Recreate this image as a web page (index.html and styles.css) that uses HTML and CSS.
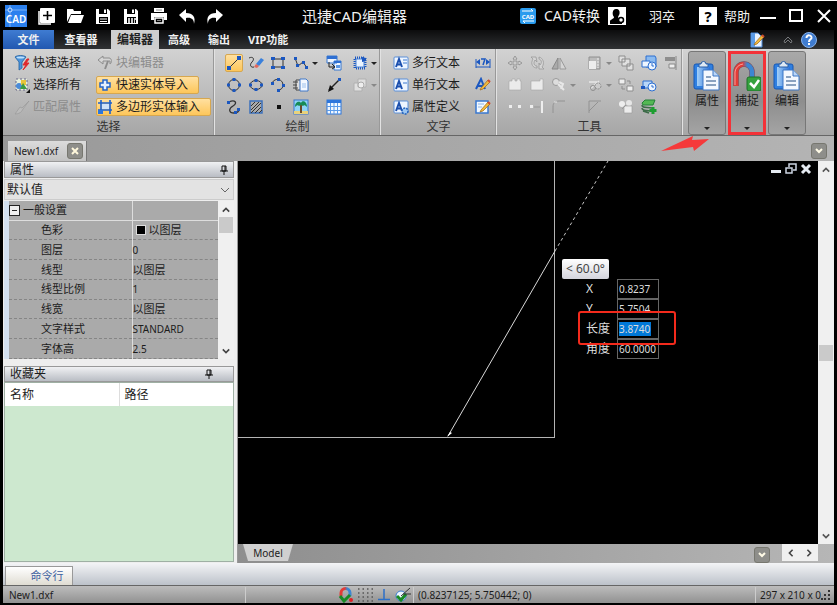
FILE: index.html
```html
<!DOCTYPE html>
<html lang="zh-CN">
<head>
  <meta charset="UTF-8">
  <meta name="viewport" content="width=device-width, initial-scale=1.0">
  <title>迅捷CAD编辑器</title>
  <link rel="stylesheet" href="styles.css">
</head>
<body>
  <svg class="defs" width="0" height="0" aria-hidden="true">
    <defs>
      <linearGradient id="blue" x1="0" y1="0" x2="1" y2="0"><stop offset="0" stop-color="#a4d0f8"/><stop offset="1" stop-color="#2a70d8"/></linearGradient>
      <linearGradient id="magnet" x1="0" y1="0" x2="1" y2="0"><stop offset="0.4" stop-color="#e23b36"/><stop offset="0.7" stop-color="#3d86d2"/></linearGradient>
      <symbol id="clip" viewBox="0 0 28 30">
        <rect x="1" y="3" width="19" height="25" rx="2" fill="#2f7fe0" stroke="#1758b4"/>
        <rect x="4" y="6" width="13" height="19" fill="url(#blue)"/>
        <path d="M6 6V3h2a2.500 2.500 0 0 1 5 0h2v3z" fill="#dfe9f4" stroke="#2b5fa6"/>
        <path d="M10 9h10l6 6v14H10z" fill="#f4f8fe" stroke="#3c76c4"/>
        <path d="M20 9v6h6" fill="#bcd6f6" stroke="#3c76c4"/>
        <path d="M13 16h5M13 20h10M13 24h10" stroke="#8aa2c0" stroke-width="2"/>
      </symbol>
      <symbol id="boxA" viewBox="0 0 16 16">
        <rect x="1" y="2" width="14" height="12" rx="1" fill="#eef5ff" stroke="#5b8fd8"/>
        <path d="M3 12L6 4l3 8M4 9.500h4" fill="none" stroke="#1b4fae" stroke-width="2"/>
      </symbol>
      <symbol id="pencil" viewBox="0 0 16 16">
        <path d="M6 11L13 3l2 2-7 7-3 1z" fill="#f2b93b" stroke="#99651a" stroke-width=".7"/>
        <path d="M13 3l2 2" stroke="#d04b2e" stroke-width="2"/>
      </symbol>
    </defs>
  </svg>

  <!-- title bar -->
  <header class="titlebar">
    <svg class="logo" viewBox="0 0 22 22"><rect width="22" height="22" fill="#2b80ee"/><path d="M5 0v22M0 5h22" stroke="#8dbdf8" stroke-width=".8"/><circle cx="5" cy="5" r="2" fill="#2b80ee" stroke="#cfe3fd"/><text x="11" y="18" class="logo-text">CAD</text></svg>
    <div class="quick">
      <button aria-label="新建"><svg viewBox="0 0 18 18"><path d="M1 4v13h12" fill="none" stroke="#fff" stroke-width="1.500"/><rect x="2" y="1" width="15" height="15" rx="1" fill="#fff"/><path d="M9.500 4v9M5 8.500h9" stroke="#000" stroke-width="1.600"/></svg></button>
      <button aria-label="打开"><svg viewBox="0 0 18 18"><path d="M1 15V2h6l1 2h7v3H5z" fill="#fff"/><path d="M5 8h13l-3 8H2z" fill="#fff"/></svg></button>
      <button aria-label="保存"><svg viewBox="0 0 18 18"><path d="M2 2h12l2 2v13H2z" fill="#fff"/><path d="M5 2h8v5H5zM5 10h9v6H5z" fill="#000"/><path d="M10 2.500h2v3.500h-2zM6 11.500h7v1H6zM6 14h7v1H6z" fill="#fff"/></svg></button>
      <button aria-label="保存为PDF"><svg viewBox="0 0 18 18"><path d="M2 2h12l2 2v13H2z" fill="#fff"/><path d="M5 2h8v5H5zM5 10h9v6H5z" fill="#000"/><path d="M10 2.500h2v3.500h-2z" fill="#fff"/><path d="M6 11h2v5H6zM9 11h2v5H9zM12 11h2v2h-1v3h-1z" fill="#ccc"/></svg></button>
      <button aria-label="打印"><svg viewBox="0 0 18 18"><path d="M4 1h10v4H4zM1 6h16v7h-3v-3H4v3H1z" fill="#fff"/><path d="M5 11h8v5H5z" fill="#000" stroke="#fff" stroke-width="1.500"/><path d="M6 3h6M7 13.500h4" stroke="#888"/></svg></button>
      <button aria-label="撤销"><svg viewBox="0 0 18 18"><path d="M1 8l7-6v4c7 0 10 4 8 11 0-5-3-7-8-6v4z" fill="#fff"/></svg></button>
      <button aria-label="重做"><svg viewBox="0 0 18 18"><path d="M17 8l-7-6v4C3 6 0 10 2 17c0-5 3-7 8-6v4z" fill="#fff"/></svg></button>
    </div>
    <h1>迅捷CAD编辑器</h1>
    <div class="account">
      <button class="convert"><svg viewBox="0 0 18 18"><rect x="1" y="1" width="16" height="16" rx="2" fill="#2a9bee"/><path d="M3 4h11l-2-2M15 14H4l2 2" fill="none" stroke="#fff"/><text x="9" y="12" class="tiny-text">CAD</text></svg>CAD转换</button>
      <button class="user"><svg viewBox="0 0 18 18"><rect width="18" height="18" fill="#fff"/><path d="M8 2c3 0 4 2 3.500 5L10 10c0 2 2 2 4 3v4H2v-3c1-2 4-2 4-4C4 8 4 2 8 2z" fill="#000"/><circle cx="13" cy="13" r="2.500" fill="#fff" stroke="#000" stroke-width="1.500"/></svg>羽卒</button>
      <button class="help"><span class="mark">?</span>帮助</button>
    </div>
    <div class="window-buttons">
      <button aria-label="最小化"><svg viewBox="0 0 16 16"><path d="M0 9h16v2H0z" fill="#fff"/></svg></button>
      <button aria-label="最大化"><svg viewBox="0 0 16 16"><rect x="2" y="2" width="12" height="11" fill="none" stroke="#fff" stroke-width="2"/></svg></button>
      <button aria-label="关闭"><svg viewBox="0 0 16 16"><path d="M2 2l12 12M14 2L2 14" stroke="#fff" stroke-width="2"/></svg></button>
    </div>
  </header>

  <!-- ribbon tabs -->
  <nav class="tabs">
    <button class="file">文件</button>
    <button class="viewer">查看器</button>
    <button class="active">编辑器</button>
    <button>高级</button>
    <button>输出</button>
    <button>VIP功能</button>
    <div class="tab-tools">
      <svg viewBox="0 0 16 16"><path d="M2 1h7l4 4v10H2z" fill="#e9f2ff" stroke="#4b88d8"/><path d="M2 1h4v14H2z" fill="#5a9be8"/><use href="#pencil"/></svg>
      <svg class="small" viewBox="0 0 10 10"><path d="M1 6l4-4 4 4-1 2-3-3-3 3z" fill="none" stroke="#77797c"/></svg>
      <svg viewBox="0 0 16 16"><circle cx="8" cy="8" r="7.500" fill="#3f7cd0" stroke="#88b2ea"/><path d="M5.500 6c0-4 5.500-3 5 0-.5 1.500-2.500 1.500-2.500 4M8 11v2" fill="none" stroke="#fff" stroke-width="2"/></svg>
    </div>
  </nav>

  <!-- ribbon -->
  <section class="ribbon">
    <div class="group select-group">
      <div class="rows">
        <button><svg viewBox="0 0 16 16"><path d="M1 2c2-2 9-2 11 0L8 7v6l-3 2V7z" fill="#4c94dc" stroke="#22609f" stroke-width=".8"/><ellipse cx="6.500" cy="2.500" rx="4" ry="1" fill="#bfe0fa"/><path d="M13 4l-4 6h3l-3 5 6-7h-3l3-4z" fill="#e0282c" stroke="#e0282c"/></svg>快速选择</button>
        <button disabled><svg viewBox="0 0 16 16"><path d="M1 5l5-4v2h6c3 0 3 5 1 6V6H6v3z" fill="#d5d5d5" stroke="#8d8d8d"/><path d="M11 6L8 14" stroke="#8d8d8d" stroke-width="2"/></svg>块编辑器</button>
        <button><svg viewBox="0 0 16 16"><rect x="2" y="2" width="11" height="11" fill="#e8f0dc" stroke="#668" stroke-dasharray="2 2"/><circle cx="5" cy="9" r="3" fill="#4a8bd8"/><path d="M7 3h5v5H7z" fill="#e8c43a"/><path d="M6 12l3-6 4 6z" fill="#3d9a44"/><path d="M16 12v4h-4z" fill="#111"/></svg>选择所有</button>
        <button class="lit"><svg viewBox="0 0 16 16"><path d="M6 3h4v3h3v4h-3v3H6v-3H3V6h3z" fill="#e3effd" stroke="#2465c8" stroke-width="1.500"/></svg>快速实体导入</button>
        <button disabled><svg viewBox="0 0 16 16"><path d="M15 2L8 9l-2-1-5 7c4 0 7-2 8-5z" fill="#bbb" stroke="#999" stroke-width=".7"/></svg>匹配属性</button>
        <button class="lit"><svg viewBox="0 0 16 16"><path d="M4 1v14M13 1v14M1 4h14M1 11h14" stroke="#1c60cc" stroke-width="1.600"/><path d="M5 5h7v5H5z" fill="#cfe2f8"/><path d="M1 11h5v4H1z" fill="#2d76dc"/></svg>多边形实体输入</button>
      </div>
      <h2>选择</h2>
    </div>

    <div class="group draw-group">
      <div class="rows">
        <button class="lit" aria-label="直线"><svg viewBox="0 0 16 16"><path d="M3 13L13 3" stroke="#333"/><path d="M1 11h4v4H1zM11 1h4v4h-4z" fill="#1b57c0"/></svg></button>
        <button aria-label="草图"><svg viewBox="0 0 16 16"><path d="M1 3c4-2 6 1 3 4s-1 6 2 5" fill="none" stroke="#333"/><path d="M8 9l5-6 3 2-5 6z" fill="#3a80dc"/><path d="M6 12l2-3 3 2-2 2z" fill="#e2675c"/></svg></button>
        <button aria-label="矩形"><svg viewBox="0 0 16 16"><path d="M3 4h10v8H3z" fill="none" stroke="#333"/><path d="M1 2h4v3H1zM11 2h4v3h-4zM1 11h4v3H1zM11 11h4v3h-4z" fill="#1b57c0"/></svg></button>
        <button class="drop" aria-label="多段线"><svg viewBox="0 0 16 16"><path d="M2 3l3 8 5-4 4 6" fill="none" stroke="#333"/><path d="M1 2h3v3H1zM3 9h3v3H3zM9 6h3v3H9zM12 11h3v3h-3z" fill="#1b57c0"/></svg></button>
        <button aria-label="插入块"><svg viewBox="0 0 16 16"><path d="M1 1h10v7H1zM8 6h7v9H8z" fill="#eef5ff" stroke="#3878d0"/><path d="M1 1h10v3H1zM8 6h7v2H8z" fill="#2e6fd2"/><path d="M3 7v5h5M6 9l3 3-3 2" fill="none" stroke="#222"/><path d="M10 10h4v3h-4z" fill="#5c97e4"/></svg></button>
        <button class="drop" aria-label="面域"><svg viewBox="0 0 16 16"><path d="M3 3h10v10H3z" fill="none" stroke="#1b57c0" stroke-width="3" stroke-dasharray="1 1"/><path d="M4 4h8v8H4z" fill="#eaf3ff" stroke="#4a83d6"/><path d="M10 2l4 1v3l-4 1z" fill="#1b57c0"/></svg></button>
        <button aria-label="圆"><svg viewBox="0 0 16 16"><circle cx="8" cy="8" r="5.500" fill="none" stroke="#333"/><path d="M6.500 1h3v3h-3zM6.500 12h3v3h-3zM1 6.500h3v3H1zM12 6.500h3v3h-3z" fill="#1b57c0"/></svg></button>
        <button aria-label="椭圆"><svg viewBox="0 0 16 16"><ellipse cx="8" cy="8" rx="6" ry="4.500" fill="none" stroke="#333"/><path d="M6.500 2h3v3h-3zM6.500 11h3v3h-3zM1 6.500h3v3H1zM12 6.500h3v3h-3z" fill="#1b57c0"/></svg></button>
        <button aria-label="圆弧"><svg viewBox="0 0 16 16"><path d="M2 6c3-6 11-4 11 2 0 3-2 5-5 5" fill="none" stroke="#333"/><path d="M1 5h3v3H1zM7 1h3v3H7zM12 7h3v3h-3zM7 12h3v3H7z" fill="#1b57c0"/></svg></button>
        <button aria-label="粘贴块"><svg viewBox="0 0 16 16"><path d="M3 3h7v10H3z" fill="#ddd" stroke="#444"/><path d="M7 2h6l2 2v10H7z" fill="#f4f8ff" stroke="#4078c8"/><path d="M9 6h4v5H9z" fill="#c8dcf6"/><path d="M0 5h5M0 8h4M0 11h5" stroke="#444"/></svg></button>
        <button aria-label="射线"><svg viewBox="0 0 16 16"><path d="M3 13L13 3" stroke="#222" stroke-width="1.500"/><path d="M2 15l2-7 4 4z" fill="#111"/><path d="M12 1h3v3h-3z" fill="#1b57c0"/></svg></button>
        <button class="drop" disabled aria-label="三维"><svg viewBox="0 0 16 16"><path d="M6 2h8v8H6zM2 6h8v8H2z" fill="#e0e0e0" stroke="#b0b0b0"/><circle cx="9" cy="8" r="3" fill="#eee" stroke="#aaa"/></svg></button>
        <button aria-label="样条曲线"><svg viewBox="0 0 16 16"><path d="M3 3c6-3 9 1 4 4s-4 7 1 7c3 0 5-1 5-4" fill="none" stroke="#333" stroke-width="1.300"/><path d="M1 2h3v3H1zM11 9h3v3h-3zM8 12h3v3H8z" fill="#1b57c0"/></svg></button>
        <button aria-label="填充"><svg viewBox="0 0 16 16"><path d="M2 2h12v12H2z" fill="#aaa" stroke="#3b70bc" stroke-width="1.500"/><path d="M3 7l4-4M3 11l8-8M3 14l10-10M7 14l6-6M11 14l3-3" stroke="#333"/></svg></button>
        <button aria-label="点"><svg viewBox="0 0 16 16"><path d="M7 6h4v4H7z" fill="#111"/></svg></button>
        <button aria-label="图像"><svg viewBox="0 0 16 16"><rect x="1" y="1" width="14" height="14" fill="#8ed4f6" stroke="#3a76cc"/><path d="M1 12h14v3H1z" fill="#e8d27c"/><path d="M8 5v9" stroke="#6d4a28" stroke-width="2"/><path d="M2 8c0-6 5-6 6-4 1-3 6-2 6 4-2-2-3-2-4-1l-2-1-2 1c-1-1-2-1-4 1z" fill="#168b55"/></svg></button>
        <button aria-label="表格"><svg viewBox="0 0 16 16"><rect x="1" y="1" width="14" height="14" fill="#f2f8ff" stroke="#2d76dc"/><path d="M1 1h14v3H1z" fill="#2d76dc"/><path d="M1 7.500h14M1 11.500h14M4.500 4v11M8 4v11M11.500 4v11" stroke="#5a9bea"/></svg></button>
      </div>
      <h2>绘制</h2>
    </div>

    <div class="group text-group">
      <div class="rows">
        <button><svg viewBox="0 0 16 16"><use href="#boxA"/><path d="M10 5h4M10 8h4" stroke="#3a78d0"/></svg>多行文本</button>
        <button aria-label="标注"><svg viewBox="0 0 16 16"><path d="M1 4v9M15 4v9M1 12h14" stroke="#1b57c0"/><path d="M1 7l4-3v6zM15 7l-4-3v6z" fill="#1b57c0"/><path d="M6 4h4l-2 6" fill="none" stroke="#1b57c0" stroke-width="1.500"/></svg></button>
        <button><svg viewBox="0 0 16 16"><use href="#boxA"/><path d="M10 6h4" stroke="#3a78d0"/></svg>单行文本</button>
        <button aria-label="文字样式"><svg viewBox="0 0 16 16"><path d="M1 12L6 2l4 10M3 9h6" fill="none" stroke="#1b57c0" stroke-width="2"/><use href="#pencil"/></svg></button>
        <button><svg viewBox="0 0 16 16"><use href="#boxA"/><circle cx="12" cy="12" r="3" fill="#9cc6f2" stroke="#2362bc" stroke-width="1.500" stroke-dasharray="2 1"/></svg>属性定义</button>
        <button aria-label="编辑文字"><svg viewBox="0 0 16 16"><path d="M1 2h12v12H1z" fill="#f2f8ff" stroke="#3a78d0" stroke-width="1.500"/><path d="M3 5h6M3 8h4" stroke="#8bb4e8"/><use href="#pencil"/></svg></button>
      </div>
      <h2>文字</h2>
    </div>

    <div class="group tool-group">
      <div class="rows">
        <button disabled aria-label="移动"><svg viewBox="0 0 16 16"><path d="M8 1l2 3H9v3h3V6l3 2-3 2V9H9v3h1l-2 3-2-3h1V9H4v1L1 8l3-2v1h3V4H6z" fill="#ccc" stroke="#8d8d8d" stroke-width=".8"/></svg></button>
        <button disabled aria-label="旋转"><svg viewBox="0 0 16 16"><path d="M7 2H2l2 2c-3 5 0 9 4 9v-2c-3 0-4-3-2-6l2 2zM10 2v2c3 1 3 4 1 6l-1-2v6h5l-2-2c3-4 1-9-3-10z" fill="#d5d5d5" stroke="#999" stroke-width=".8"/></svg></button>
        <button disabled aria-label="镜像"><svg viewBox="0 0 16 16"><path d="M7 3v11H1z" fill="#aaa" stroke="#888"/><path d="M9 3v11h6z" fill="#d5d5d5" stroke="#999"/></svg></button>
        <button disabled class="drop" aria-label="缩放"><svg viewBox="0 0 16 16"><path d="M2 2h11v12H2z" fill="#bbb" stroke="#909090"/><path d="M2 6h7v8H2z" fill="#eee"/><path d="M11 3v10" stroke="#eee" stroke-dasharray="2 1"/></svg></button>
        <button disabled aria-label="组合"><svg viewBox="0 0 16 16"><path d="M1 1h6v6H1zM9 9h6v6H9zM4 4h8v7H4z" fill="#e0e0e0" stroke="#8d8d8d"/></svg></button>
        <button aria-label="测量"><svg viewBox="0 0 16 16"><path d="M5 1h9l1 2v9H5z" fill="#8abaf0" stroke="#2d6fd0"/><path d="M1 6h8v6H1z" fill="#edf5ff" stroke="#2d6fd0"/><circle cx="11" cy="11" r="4" fill="#edf5ff" stroke="#2d6fd0"/><path d="M11 8v3h2" fill="none" stroke="#2d6fd0"/></svg></button>
        <button disabled aria-label="对齐"><svg viewBox="0 0 16 16"><path d="M13 1v14" stroke="#888"/><path d="M2 2h10v4H2z" fill="#8e8e8e"/><path d="M6 9h6v4H6z" fill="#eee" stroke="#888"/></svg></button>
        <button disabled aria-label="打断"><svg viewBox="0 0 16 16"><path d="M2 4h3V2h3v2h2V2h3v2h1v9H2z" fill="#ebebeb" stroke="#a5a5a5" stroke-width=".6"/></svg></button>
        <button disabled aria-label="合并"><svg viewBox="0 0 16 16"><path d="M2 4h9V2h3v11H2z" fill="#ebebeb" stroke="#a5a5a5" stroke-width=".6"/></svg></button>
        <button disabled class="drop" aria-label="分解"><svg viewBox="0 0 16 16"><circle cx="5" cy="5" r="3.500" fill="#ddd" stroke="#999"/><path d="M7 7l6 6M8 5l4 2-2 5" stroke="#e8e8e8" fill="none" stroke-width="2"/></svg></button>
        <button disabled class="drop" aria-label="修剪"><svg viewBox="0 0 16 16"><path d="M2 5h8M3 12l9-8" stroke="#e8e8e8" stroke-width="1.500"/><circle cx="6" cy="11" r="2.500" fill="none" stroke="#8e8e8e"/><circle cx="11" cy="9" r="3" fill="#ccc" stroke="#8e8e8e" stroke-dasharray="2 1"/></svg></button>
        <button disabled aria-label="取消组合"><svg viewBox="0 0 16 16"><path d="M1 2h6v5H1zM9 9h6v5H9z" fill="#eee" stroke="#8d8d8d"/><path d="M9 4h3v3M4 9v3h3" fill="none" stroke="#8d8d8d"/></svg></button>
        <button aria-label="测距"><svg viewBox="0 0 16 16"><path d="M2 4h9v7H2z" fill="#b8d6f8" stroke="#2d6fd0"/><path d="M0 9h4v3H0z" fill="#1b57c0"/><circle cx="11" cy="10" r="4" fill="#edf5ff" stroke="#2d6fd0"/><path d="M11 8v2h2" fill="none" stroke="#2d6fd0"/></svg></button>
        <span></span>
        <button disabled aria-label="断点"><svg viewBox="0 0 16 16"><path d="M2 6h3v3H2zM11 6h3v3h-3z" fill="#eee"/></svg></button>
        <button disabled aria-label="延伸"><svg viewBox="0 0 16 16"><path d="M1 6h3v3H1z" fill="#eee"/><path d="M5 8h6" stroke="#999"/><path d="M13 2v12" stroke="#eee" stroke-width="2"/></svg></button>
        <button disabled aria-label="圆角"><svg viewBox="0 0 16 16"><path d="M2 14V8c0-4 2-6 6-6h6" fill="none" stroke="#929292"/><path d="M3 3h3" stroke="#e5e5e5"/></svg></button>
        <button disabled aria-label="倒角"><svg viewBox="0 0 16 16"><path d="M2 14V2h12M2 12L11 3" fill="none" stroke="#929292"/></svg></button>
        <button disabled aria-label="打散"><svg viewBox="0 0 16 16"><circle cx="4" cy="5" r="3" fill="#eee"/><circle cx="11" cy="4" r="3" fill="#e6e6e6"/><path d="M6 7h8v7H6z" fill="#ececec" stroke="#999" stroke-width=".6"/><path d="M4 10l4-4" stroke="#999"/></svg></button>
        <button aria-label="图层"><svg viewBox="0 0 16 16"><path d="M1 4l3-3h10l-2 5H2z" fill="#54b854" stroke="#258038"/><path d="M1 6c0 3 4 2 10 3M1 9c0 3 4 2 8 3M2 12l6 2" fill="none" stroke="#3d6b48" stroke-width="1.500"/><path d="M12 8v7M8.500 11.500h7" stroke="#1d9e30" stroke-width="3"/></svg></button>
      </div>
      <h2>工具</h2>
    </div>

    <div class="big-buttons">
      <button>
        <svg class="big" viewBox="0 0 28 30"><use href="#clip"/></svg>属性<i class="caret"></i>
        <svg class="arrow-note" viewBox="0 0 50 16"><path d="M0 15L32 0l-1 4 17-1-15 12-1-4z" fill="#f5393a"/></svg>
      </button>
      <button class="marked">
        <svg class="big" viewBox="0 0 28 30"><path d="M3 25V11a8 8 0 0 1 16 0v8" fill="none" stroke="#7a4a58" stroke-width="5.500"/><path d="M3 25V11a8 8 0 0 1 16 0v8" fill="none" stroke="url(#magnet)" stroke-width="4.500"/><path d="M2 24V11a9 9 0 0 1 8-8" fill="none" stroke="#f7a09c"/><rect x="14" y="16" width="14" height="14" rx="2" fill="#35a23e" stroke="#1c7228"/><path d="M17 22l4 4 5-7" fill="none" stroke="#fff" stroke-width="2.500"/></svg>捕捉<i class="caret"></i>
      </button>
      <button>
        <svg class="big" viewBox="0 0 28 30"><use href="#clip"/></svg>编辑<i class="caret"></i>
      </button>
    </div>
  </section>

  <!-- open documents -->
  <div class="documents">
    <div class="doc-tab">New1.dxf
      <button aria-label="关闭文档"><svg viewBox="0 0 10 10"><path d="M2 2l6 6M8 2L2 8" stroke="#fff8dc" stroke-width="2"/></svg></button>
    </div>
    <button class="square-drop" aria-label="文档列表"><svg viewBox="0 0 10 10"><path d="M2 3l3 3 3-3" fill="none" stroke="#fffbe6" stroke-width="2"/></svg></button>
  </div>

  <main>
    <aside>
      <div class="panel-title">属性<svg viewBox="0 0 8 10"><path d="M2 1h4v5H2zM0 6h8M4 6v4M5 1v5" fill="none" stroke="#111"/></svg></div>
      <div class="preset">
        <select aria-label="默认值"><option>默认值</option></select>
        <svg viewBox="0 0 10 6"><path d="M1 1l4 4 4-4" fill="none" stroke="#666"/></svg>
      </div>
      <div class="props">
        <table>
          <tr class="section"><th><i class="minus"></i>一般设置</th><td></td></tr>
          <tr><th>色彩</th><td><i class="swatch"></i>以图层</td></tr>
          <tr><th>图层</th><td>0</td></tr>
          <tr><th>线型</th><td>以图层</td></tr>
          <tr><th>线型比例</th><td>1</td></tr>
          <tr><th>线宽</th><td>以图层</td></tr>
          <tr><th>文字样式</th><td>STANDARD</td></tr>
          <tr><th>字体高</th><td>2.5</td></tr>
        </table>
        <div class="scroll">
          <svg viewBox="0 0 10 6"><path d="M1 5l4-4 4 4" fill="none" stroke="#444" stroke-width="2"/></svg>
          <i class="thumb"></i>
          <svg class="end" viewBox="0 0 10 6"><path d="M1 1l4 4 4-4" fill="none" stroke="#444" stroke-width="2"/></svg>
        </div>
      </div>
      <div class="panel-title favs">收藏夹<svg viewBox="0 0 8 10"><path d="M2 1h4v5H2zM0 6h8M4 6v4M5 1v5" fill="none" stroke="#111"/></svg></div>
      <div class="fav-list">
        <table><tr><th>名称</th><th>路径</th></tr></table>
      </div>
    </aside>

    <section class="workspace">
      <div class="view">
        <div class="canvas">
          <svg class="drawing">
            <path d="M316.500 0V277M0 276.500H317" fill="none" stroke="#b4b4b4"/>
            <path d="M210 275L317 90" stroke="#d8d8d8"/>
            <path d="M317 90L370 0" stroke="#c8c8c8" stroke-dasharray="3 3"/>
            <path d="M209 276l3-5 2 1z" fill="#fff"/>
          </svg>
          <div class="mdi">
            <svg viewBox="0 0 12 12"><path d="M1 7h10v3H1z" fill="#e6ebf2"/></svg>
            <svg viewBox="0 0 12 12"><path d="M4 4V1h7v6H8M1 5h6v5H1z" fill="none" stroke="#cdd5e2" stroke-width="1.500"/></svg>
            <svg viewBox="0 0 12 12"><path d="M2 2l8 8M10 2l-8 8" stroke="#e6ebf2" stroke-width="3"/></svg>
          </div>
          <div class="angle">&lt; 60.0°</div>
          <form class="coords">
            <label for="cx">X</label><input id="cx" value="0.8237">
            <label for="cy">Y</label><input id="cy" value="5.7504">
            <label for="len">长度</label><span class="field"><input id="len" class="picked" value="3.8740"></span>
            <label for="ang">角度</label><input id="ang" value="60.0000">
          </form>
          <div class="length-note"></div>
        </div>
        <div class="scroll tall">
          <svg viewBox="0 0 10 6"><path d="M1 5l4-4 4 4" fill="none" stroke="#555" stroke-width="2"/></svg>
          <i class="thumb"></i>
          <svg class="end" viewBox="0 0 10 6"><path d="M1 1l4 4 4-4" fill="none" stroke="#555" stroke-width="2"/></svg>
        </div>
      </div>
      <div class="sheets">
        <button class="sheet">Model</button>
        <button class="square-drop" aria-label="布局列表"><svg viewBox="0 0 10 10"><path d="M2 3l3 3 3-3" fill="none" stroke="#fffbe6" stroke-width="2"/></svg></button>
        <div class="h-scroll">
          <svg viewBox="0 0 6 10"><path d="M5 1L1 5l4 4" fill="none" stroke="#444" stroke-width="2"/></svg>
          <svg viewBox="0 0 6 10"><path d="M1 1l4 4-4 4" fill="none" stroke="#444" stroke-width="2"/></svg>
        </div>
      </div>
    </section>
  </main>

  <div class="command"><button>命令行</button></div>

  <footer>
    <span class="name">New1.dxf</span>
    <div class="modes">
      <button aria-label="对象捕捉"><svg viewBox="0 0 16 16"><path d="M3 9V6a4.500 4.500 0 0 1 9 0v3" fill="none" stroke="url(#magnet)" stroke-width="3"/><path d="M2 9l4 5 6-6" fill="none" stroke="#178a25" stroke-width="3"/><circle cx="13" cy="13" r="2" fill="#e01f24"/></svg></button>
      <button aria-label="栅格"><svg viewBox="0 0 16 16"><path d="M1 2h15M1 6h15M1 10h15M1 14h15" stroke="#555" stroke-width="1.500" stroke-dasharray="1.500 3"/></svg></button>
      <button aria-label="正交"><svg viewBox="0 0 16 16"><path d="M8 2v10M2 12.500h12" stroke="#2c6fc8" stroke-width="1.500"/></svg></button>
      <button aria-label="追踪"><svg viewBox="0 0 16 16"><circle cx="6" cy="9" r="5" fill="#eef6ff" stroke="#3a7dd0"/><path d="M2 9l4 4 5-6" fill="none" stroke="#178a25" stroke-width="3"/><path d="M6 9l9-8M8 7h8" stroke="#333"/></svg></button>
    </div>
    <span class="position">(0.8237125; 5.750442; 0)</span>
    <span class="size">297 x 210 x 0</span>
    <svg class="grip" viewBox="0 0 10 10"><path d="M7 0h2v2H7zM3 4h2v2H3zM7 4h2v2H7zM0 8h2v2H0zM3 8h2v2H3zM7 8h2v2H7z" fill="#333"/></svg>
  </footer>
</body>
</html>
```
FILE: styles.css
```css
* {
  box-sizing: border-box;
}

body {
  margin: 0;
  min-height: 100vh;
  display: flex;
  flex-direction: column;
  background: #000;
  color: #1c1c1c;
  border-top: 1px solid #fff;
  padding-bottom: 2px;
  font-family: "Noto Sans", "Noto Sans CJK SC", sans-serif;
  font-size: 12px;
  line-height: 16px;
}

button {
  background: none;
  border: 0;
  margin: 0;
  padding: 0;
  color: inherit;
  font: inherit;
  white-space: nowrap;
}

svg {
  display: block;
  flex: none;
}

.defs {
  position: absolute;
}

/* title bar */
.titlebar {
  height: 29px;
  display: flex;
  align-items: center;
  padding: 0 5px;
  color: #f2f2f2;
  font-size: 13px;
}

.logo {
  width: 22px;
  height: 22px;
}

.logo-text {
  fill: #fff;
  font-size: 10px;
  font-weight: 600;
  text-anchor: middle;
}

.tiny-text {
  fill: #fff;
  font-size: 6px;
  font-weight: 700;
  text-anchor: middle;
}

.quick {
  display: flex;
  margin-left: 6px;
}

.quick button {
  width: 28px;
  display: flex;
  justify-content: center;
}

.quick svg,
.account svg {
  width: 18px;
  height: 18px;
}

.titlebar h1 {
  margin: 0 auto 0 73px;
  font-size: 15px;
  font-weight: 400;
  line-height: 20px;
  white-space: nowrap;
}

.account {
  display: flex;
  gap: 8px;
}

.account button {
  display: flex;
  align-items: center;
  gap: 7px;
}

.account .convert {
  font-size: 14px;
}

.account .user {
  gap: 23px;
}

.account .help {
  margin-left: 16px;
}

.mark {
  width: 18px;
  background: #fff;
  color: #000;
  font-size: 15px;
  font-weight: 700;
  line-height: 18px;
}

.window-buttons {
  display: flex;
  gap: 12px;
  margin-left: 10px;
}

.window-buttons svg {
  width: 16px;
  height: 16px;
}

/* ribbon tabs */
.tabs {
  height: 19px;
  display: flex;
  margin: 0 3px;
  background: linear-gradient(#0c0c0d, #303234);
  color: #f0f0f0;
  font-size: 11px;
  font-weight: 700;
}

.tabs button {
  padding: 0 9px;
}

.tabs .file {
  width: 51px;
  background: linear-gradient(#3f7cd2, #2258b0);
}

.tabs .viewer {
  width: 57px;
  padding: 0 12px 0 9px;
}

.tabs .active {
  padding: 0 6px;
  background: #cfcfcf;
  color: #222;
  font-size: 12px;
}

.tab-tools {
  display: flex;
  align-items: center;
  gap: 18px;
  margin-left: auto;
  padding-right: 17px;
}

.tab-tools svg {
  width: 16px;
  height: 16px;
}

.tab-tools .small {
  width: 10px;
  height: 10px;
  margin-right: -10px;
}

/* ribbon */
.ribbon {
  display: flex;
  margin: 0 3px;
  background: linear-gradient(#d2d2d2, #bdbdbd 50%, #a6a6a6);
  border-bottom: 1px solid #666;
}

.group {
  padding: 3px 2px 0;
  border-right: 1px solid #e2e2e2;
  box-shadow: -1px 0 #999 inset;
}

.group h2 {
  margin: 0;
  color: #333;
  font-size: 12px;
  font-weight: 400;
  line-height: 17px;
  text-align: center;
}

.rows {
  display: grid;
  grid-auto-rows: 22px;
  align-items: center;
}

.rows button {
  height: 18px;
  display: flex;
  align-items: center;
  gap: 3px;
  border: 1px solid transparent;
  justify-self: start;
}

.rows svg {
  width: 16px;
  height: 16px;
}

.rows button:disabled {
  color: #8c8c8c;
}

.rows .lit {
  background: linear-gradient(#ffe0a0, #fdc65a);
  border-color: #d6a750;
  border-radius: 2px;
}

.drop::after,
.caret {
  content: "";
  border: 3px solid transparent;
  border-top-color: #222;
  border-bottom: 0;
}

.drop:disabled::after {
  border-top-color: #888;
}

.select-group {
  width: 212px;
}

.select-group .rows {
  grid-template-columns: 83px auto;
  padding-left: 8px;
}

.select-group button {
  padding-right: 10px;
}

.draw-group {
  width: 166px;
}

.draw-group .rows {
  grid-template-columns: 22px 22px 23px 33px 26px 30px;
  padding-left: 8px;
}

.text-group {
  width: 116px;
}

.text-group .rows {
  grid-template-columns: 82px 20px;
  padding-left: 9px;
}

.tool-group {
  width: 186px;
}

.tool-group .rows {
  grid-template-columns: 22px 22px 36px 31px 23px 22px 20px;
  padding-left: 7px;
}

.big-buttons {
  display: flex;
  gap: 2px;
  padding: 2px 0 0 5px;
}

.big-buttons button {
  position: relative;
  width: 38px;
  display: flex;
  flex-direction: column;
  align-items: center;
  padding: 9px 0 4px;
  border: 1px solid #777;
  border-radius: 3px;
  background: linear-gradient(#a9a9a9, #8e8e8e 60%, #a4a4a4);
  line-height: 20px;
}

.big {
  width: 28px;
  height: 30px;
}

.big-buttons .caret {
  margin-top: auto;
}

.marked::after {
  content: "";
  position: absolute;
  inset: -1px;
  border: 3px solid #f33238;
}

.arrow-note {
  position: absolute;
  z-index: 2;
  left: -28px;
  top: 84px;
  width: 50px;
  height: 16px;
}

/* documents row */
.documents {
  height: 25px;
  display: flex;
  justify-content: space-between;
  align-items: flex-end;
  margin: 0 3px;
  padding: 0 7px 0 5px;
  background: linear-gradient(90deg, #999, #b4b4b4);
  font-size: 10px;
}

.doc-tab {
  display: flex;
  align-items: center;
  gap: 9px;
  height: 20px;
  padding: 0 3px 0 6px;
  background: linear-gradient(#dcdcdc, #c2c2c2);
  border-right: 1px solid #777;
}

.doc-tab button,
.square-drop {
  width: 16px;
  height: 16px;
  display: flex;
  align-items: center;
  justify-content: center;
  background: #8e8e8a;
  border: 1px solid #77776f;
  border-radius: 3px;
}

.doc-tab svg,
.square-drop svg {
  width: 10px;
  height: 10px;
}

.documents .square-drop {
  margin-bottom: 2px;
}

/* main area */
main {
  flex: 1;
  display: flex;
  margin: 0 3px;
  background: #eee;
}

aside {
  width: 235px;
  display: flex;
  flex-direction: column;
  padding: 0 3px 1px 1px;
  border-right: 1px solid #999;
}

.panel-title {
  display: flex;
  align-items: center;
  justify-content: space-between;
  height: 17px;
  padding: 0 5px 0 5px;
  background: linear-gradient(#f0f1f3, #b9bdc4);
  border: 1px solid #999;
}

.panel-title svg {
  width: 8px;
  height: 10px;
}

.favs {
  margin-top: 6px;
  height: 16px;
  padding-right: 20px;
}

.preset {
  position: relative;
  margin-top: 1px;
}

.preset select {
  width: 100%;
  height: 21px;
  padding: 0 2px;
  appearance: none;
  background: #e3e3e3;
  border: 1px solid #ccc;
  color: #222;
  font: inherit;
}

.preset svg {
  position: absolute;
  right: 4px;
  top: 8px;
  width: 10px;
  height: 6px;
}

.props {
  display: flex;
  border-left: 5px solid #d3e0f0;
  margin: 1px 0;
}

.props table {
  flex: 1;
  height: 158px;
  border-collapse: collapse;
  background: #aaa;
  font-size: 11px;
}

.props th,
.props td {
  padding: 0;
  border-bottom: 1px dashed #858585;
  font-weight: 400;
  line-height: 16px;
  text-align: left;
}

.props th {
  width: 123px;
  padding-left: 32px;
  border-right: 1px solid #ddd;
}

.props td {
  font-size: 10px;
}

.props tr:nth-child(2) td,
.props tr:nth-child(4) td,
.props tr:nth-child(6) td {
  font-size: 11px;
}

.props .section th,
.props .section td {
  border-bottom: 1px solid #ddd;
}

.props .section th {
  padding-left: 0;
}

.minus {
  display: inline-block;
  width: 11px;
  height: 11px;
  margin-right: 3px;
  border: 1px solid #222;
  background: linear-gradient(#222, #222) center / 5px 1px no-repeat #eee;
  vertical-align: -2px;
}

.swatch {
  display: inline-block;
  width: 10px;
  height: 10px;
  margin: 0 3px;
  background: #000;
  border: 1px solid #ddd;
  vertical-align: -1px;
}

.scroll {
  width: 16px;
  display: flex;
  flex-direction: column;
  align-items: center;
  padding: 6px 0 5px;
  background: #f0f0f0;
}

.scroll svg {
  width: 8px;
  height: 6px;
}

.thumb {
  width: 14px;
  height: 16px;
  margin-top: 4px;
  background: #cacaca;
}

.scroll .end {
  margin-top: auto;
}

.fav-list {
  flex: 1;
  background: #cde8cf;
  border: 1px solid #9fb0a4;
}

.fav-list table {
  width: 100%;
  border-collapse: collapse;
  background: #fff;
}

.fav-list th {
  width: 50%;
  height: 23px;
  padding: 0 5px;
  font-weight: 400;
  text-align: left;
}

.fav-list th + th {
  border-left: 1px solid #ddd;
}

/* drawing */
.workspace {
  flex: 1;
  display: flex;
  flex-direction: column;
}

.view {
  flex: 1;
  display: flex;
}

.canvas {
  position: relative;
  flex: 1;
  background: #000;
  color: #ddd;
}

.drawing {
  position: absolute;
  width: 100%;
  height: 100%;
}

.mdi {
  position: absolute;
  right: 6px;
  top: 2px;
  display: flex;
  gap: 3px;
}

.mdi svg {
  width: 12px;
  height: 12px;
}

.angle {
  position: absolute;
  left: 324px;
  top: 98px;
  padding: 2px 4px;
  background: linear-gradient(#fff, #d4d4dc);
  border-radius: 2px;
  color: #444;
}

.coords {
  position: absolute;
  left: 348px;
  top: 118px;
  display: grid;
  grid-template-columns: 31px 42px;
  grid-auto-rows: 20px;
  align-items: center;
}

.coords input {
  width: 42px;
  height: 20px;
  padding: 0 1px;
  background: #000;
  border: 1px solid #666;
  color: #ddd;
  font: inherit;
  font-size: 10px;
}

.field {
  display: flex;
  align-items: center;
  height: 20px;
  padding: 0 1px;
  border: 1px solid #666;
}

.coords .picked {
  width: 32px;
  height: 14px;
  padding: 0;
  border: 0;
  background: #0078d7;
}

.length-note {
  position: absolute;
  left: 340px;
  top: 150px;
  width: 98px;
  height: 34px;
  border: 2px solid #f32a1c;
  border-radius: 3px;
}

.tall .thumb {
  margin-top: auto;
}

.sheets {
  height: 19px;
  display: flex;
  background: linear-gradient(90deg, #8e8e8e, #b6b6b6);
  padding-right: 16px;
}

.sheet {
  width: 50px;
  height: 17px;
  margin-left: 5px;
  background: #d0d0d0;
  clip-path: polygon(0 0, 100% 0, 90% 100%, 10% 100%);
  font-size: 10px;
}

.sheets .square-drop {
  margin: 3px 12px 0 auto;
}

.h-scroll {
  width: 36px;
  height: 17px;
  display: flex;
  justify-content: space-around;
  align-items: center;
  background: #f0f0f0;
}

.h-scroll svg {
  width: 6px;
  height: 8px;
}

/* bottom bars */
.command {
  height: 22px;
  display: flex;
  align-items: flex-end;
  margin: 0 3px;
  padding-left: 2px;
  background: linear-gradient(#f3f4f6, #bcc2ca);
}

.command button {
  width: 68px;
  height: 19px;
  padding-left: 16px;
  background: linear-gradient(#fff, #dfdcd2);
  border: 1px solid #999;
  border-bottom: 0;
  color: #3d5f9f;
  font-size: 11px;
}

footer {
  height: 18px;
  display: flex;
  align-items: center;
  margin: 0 3px;
  padding: 0 3px 0 6px;
  background: linear-gradient(#bdbdbd, #919191);
  border-top: 1px solid #666;
  font-size: 10px;
}

footer .name {
  width: 237px;
  border-right: 1px solid #ccc;
}

.modes {
  display: flex;
  gap: 3px;
  margin-left: 92px;
}

.modes svg {
  width: 16px;
  height: 16px;
}

.position {
  margin-left: 2px;
  padding-left: 4px;
  border-left: 1px solid #ccc;
}

.size {
  margin-left: auto;
  padding-left: 4px;
  border-left: 1px solid #ccc;
}

.grip {
  width: 10px;
  height: 10px;
}
```
